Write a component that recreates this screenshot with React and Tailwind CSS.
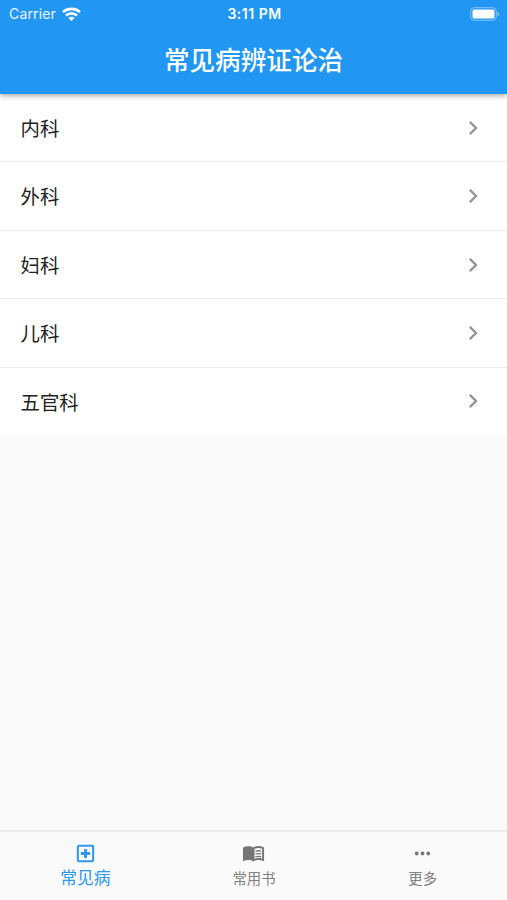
import React from 'react';
import { MdChevronRight, MdMoreHoriz } from 'react-icons/md';

const categories = ['内科', '外科', '妇科', '儿科', '五官科'];

function HospitalIcon({ className }) {
  return (
    <svg className={className} viewBox="0 0 24 24" fill="none" stroke="currentColor">
      <rect x="4" y="4" width="16" height="16" rx="1" strokeWidth="2.1" />
      <path d="M12 7.2v9.6M7.2 12h9.6" strokeWidth="3" />
    </svg>
  );
}

function BookIcon({ className }) {
  return (
    <svg className={className} viewBox="0 0 24 24" fill="none" stroke="currentColor">
      <path d="M1 6c3.2-2 8-2 11 0v14c-3-1.7-7.5-1.7-11 0z" fill="currentColor" stroke="none" />
      <path d="M12 6.6c3-1.6 7-1.7 10-.2v12.2c-3-1.2-7-1.1-10 .4z" strokeWidth="2" />
      <path d="M14 9.6c2-.6 4-.6 6 0M14 12.5c2-.6 4-.6 6 0M14 15.4c2-.6 4-.6 6 0" strokeWidth="1.4" />
    </svg>
  );
}

const tabs = [
  { label: '常见病', icon: HospitalIcon, active: true },
  { label: '常用书', icon: BookIcon },
  { label: '更多', icon: MdMoreHoriz }
];

function StatusBar() {
  return (
    <div className="grid h-[27px] grid-cols-[1fr_auto_1fr] items-center pl-[9px] pr-[7px] font-['Inter','Liberation_Sans',sans-serif] text-white">
      <div className="flex items-center gap-[6px]">
        <span className="text-[14px] leading-none tracking-[0.15px] text-white/90">Carrier</span>
        <svg className="h-[14px] w-[19px]" viewBox="0 0 19 14" fill="none" stroke="currentColor" strokeWidth="2.7">
          <path d="M1 5.1C5.8 .9 13.2 .9 18 5.1" />
          <path d="M4 8.6c3.2-2.9 7.8-2.9 11 0" />
          <path d="M6.4 11c1.7-1.6 4.5-1.6 6.2 0L9.5 14z" fill="currentColor" stroke="none" />
        </svg>
      </div>
      <span className="text-center text-[14px] font-semibold leading-none tracking-[0.5px]">3:11 PM</span>
      <svg className="h-[14px] w-[30px] justify-self-end" viewBox="0 0 30 14">
        <rect x=".7" y=".7" width="25.6" height="12.6" rx="3.6" fill="none" stroke="white" strokeOpacity=".45" />
        <rect x="2.5" y="2.5" width="22" height="9" rx="1.6" fill="white" />
        <path d="M27.6 5v4c1-.4 1.6-1.1 1.6-2s-.6-1.6-1.6-2z" fill="white" fillOpacity=".5" />
      </svg>
    </div>
  );
}

export default function App() {
  return (
    <div className="flex h-[900px] w-full flex-col overflow-hidden bg-[#fafafa] font-['Noto_Sans_CJK_SC',sans-serif]">
      <header className="relative h-[94px] shrink-0 bg-[#2196f3] text-white shadow-[0_2px_5px_rgba(0,0,0,0.32)]">
        <StatusBar />
        <h1 className="flex h-[64px] items-center justify-center text-[25.6px] font-medium leading-none">
          常见病辨证论治
        </h1>
      </header>

      <ul className="flex h-[342px] shrink-0 flex-col bg-white">
        {categories.map((name) => (
          <li
            key={name}
            className="flex flex-1 items-center justify-between border-b border-[#ececec] pl-[20.5px] pr-[20px] last:border-[#fafafa]"
          >
            <span className="text-[19.4px] leading-none text-[#222222]">{name}</span>
            <MdChevronRight className="size-7 text-[#959595]" />
          </li>
        ))}
      </ul>

      {/* Bottom tabs */}
      <nav className="mt-auto grid h-[70px] shrink-0 grid-cols-3 border-t-2 border-[#ececec] pl-px">
        {tabs.map((tab) => (
          <div
            key={tab.label}
            className={`flex flex-col items-center pt-[10px] ${tab.active ? 'text-[#2d98e8]' : 'text-[#757575]'}`}
          >
            <tab.icon className="size-[23px]" />
            <span className={tab.active ? 'mt-[3px] text-[16.8px] leading-[18px]' : 'mt-1 text-[14.4px] leading-[18px] text-[#808080]'}>
              {tab.label}
            </span>
          </div>
        ))}
      </nav>
    </div>
  );
}
